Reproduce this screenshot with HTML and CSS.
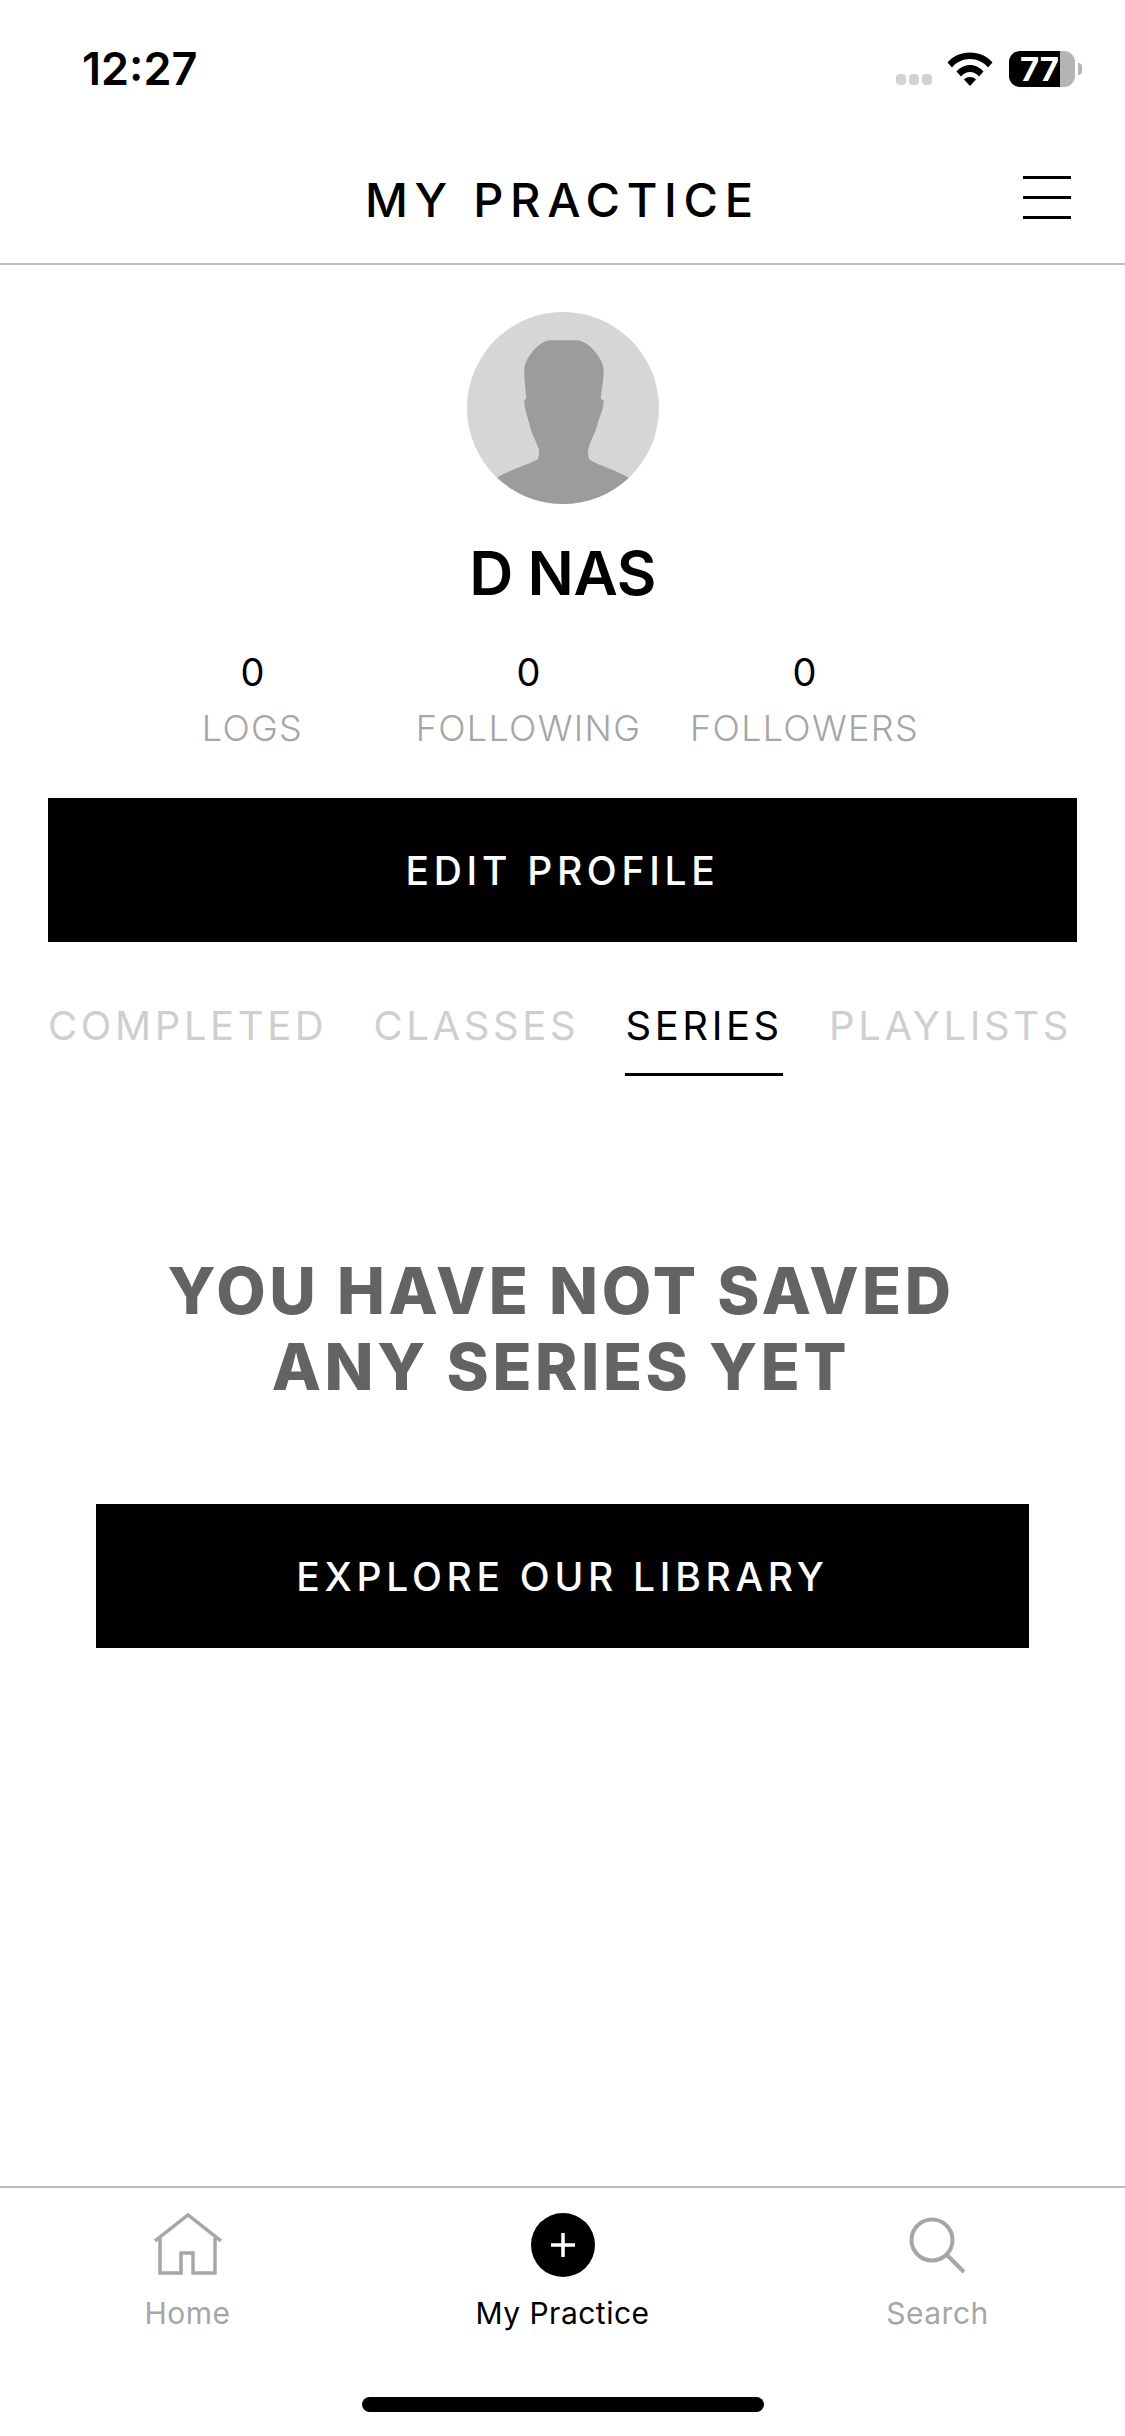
FILE: index.html
```html
<!DOCTYPE html>
<html lang="en">
<head>
	<meta charset="UTF-8">
	<title>My Practice</title>
	<link rel="stylesheet" href="styles.css">
</head>
<body>
    <div class="page">
        <div class="status_bar">
            <span class="time">12:27</span>
            <div class="status_icons">
                <div class="signal"><i></i><i></i><i></i></div>
                <svg class="wifi" width="46" height="34" viewBox="0 0 46 34">
                    <path d="M0.5 10.5C6 4 14 0.5 23 0.5S40 4 45.5 10.5L41 15.5C36.500 10 30 7 23 7S9.500 10 5 15.500Z"/>
                    <path d="M9.500 19.500C13 15.500 18 13 23 13S33 15.500 36.500 19.500L32 24.500C29.500 21.500 26.500 20 23 20S16.500 21.500 14 24.500Z"/>
                    <path d="M17 27.500C18.500 25.800 20.700 25 23 25S27.500 25.800 29 27.500L23 34Z"/>
                </svg>
                <div class="battery"><span>77</span></div>
                <div class="battery_nub"></div>
            </div>
        </div>

        <header class="top_bar">
            <h1 class="top_title">MY PRACTICE</h1>
            <div class="menu_btn"><i></i><i></i><i></i></div>
        </header>

        <section class="profile">
            <svg class="avatar" width="192" height="192" viewBox="0 0 191 191">
                <circle cx="95.500" cy="95.500" r="95.500" fill="#d6d6d6"/>
                <path fill="#9c9c9c" d="M30 165C40 158 60 152 70 147C72 143 72 139 71 135C67 125 63 118 62 111C60 103 57 97 57 88L59 86C58 75 57 68 57 58C57 46 72 28 83 28L109 28C120 28 136 46 136 58C136 68 134 76 133 86L136 88C136 97 132 103 130 111C128 120 124 125 121 135C120 139 120 143 122 147C132 153 150 158 161 165A95.500 95.500 0 0 1 30 165Z"/>
            </svg>
            <h2 class="user_name">D NAS</h2>
            <div class="stats">
                <div class="stat"><span class="stat_num">0</span><span class="stat_label">LOGS</span></div>
                <div class="stat"><span class="stat_num">0</span><span class="stat_label">FOLLOWING</span></div>
                <div class="stat"><span class="stat_num">0</span><span class="stat_label">FOLLOWERS</span></div>
            </div>
            <a class="black_btn edit_btn">EDIT PROFILE</a>
        </section>

        <nav class="tabs">
            <a class="tab">COMPLETED</a>
            <a class="tab">CLASSES</a>
            <a class="tab active">SERIES</a>
            <a class="tab">PLAYLISTS</a>
        </nav>

        <main class="empty">
            <h3 class="empty_title">YOU HAVE NOT SAVED<br>ANY SERIES YET</h3>
            <a class="black_btn explore_btn">EXPLORE OUR LIBRARY</a>
        </main>

        <footer class="tab_bar">
            <a class="bar_item">
                <svg class="bar_icon" width="68" height="64" viewBox="0 0 68 64" fill="none" stroke="#a6a6a6" stroke-width="3.500">
                    <path d="M1 28L34 2L67 28"/>
                    <path d="M6 25V60H27V40H39V60H61V25"/>
                </svg>
                <span>Home</span>
            </a>
            <a class="bar_item current">
                <svg class="bar_icon" width="64" height="64" viewBox="0 0 64 64">
                    <circle cx="32" cy="32" r="32" fill="#000"/>
                    <path d="M32 20V44M20 32H44" stroke="#fff" stroke-width="3.500"/>
                </svg>
                <span>My Practice</span>
            </a>
            <a class="bar_item">
                <svg class="bar_icon" width="60" height="64" viewBox="0 0 60 64" fill="none" stroke="#a6a6a6" stroke-width="4">
                    <circle cx="24" cy="27" r="20.500"/>
                    <path d="M39 42L56 59"/>
                </svg>
                <span>Search</span>
            </a>
        </footer>

        <div class="home_line"></div>
    </div>
</body>
</html>
```

FILE: styles.css
```css
*{
    box-sizing: border-box;
}
body{
    margin: 0;
    background: #fff;
    font-family: "Inter", "Liberation Sans", sans-serif;
    color: #000;
}
.page{
    width: 1125px;
    height: 2436px;
    display: flex;
    flex-direction: column;
    overflow: hidden;
}
.status_bar{
    height: 136px;
    padding: 45px 43px 0 82px;
    display: flex;
    justify-content: space-between;
    align-items: flex-start;
}
.time{
    font-size: 45px;
    line-height: 48px;
    font-weight: 600;
    letter-spacing: 0;
}
.status_icons{
    display: flex;
    align-items: flex-start;
    padding-top: 6px;
}
.signal{
    display: flex;
    gap: 3px;
    margin: 23px 15px 0 0;
}
.signal i{
    width: 10px;
    height: 11px;
    border-radius: 4px;
    background: #d2d2d2;
}
.wifi{
    margin: 1px 16px 0 0;
}
.battery{
    width: 66px;
    height: 36px;
    border-radius: 11px;
    background: linear-gradient(to right, #000 77%, #b5b5b5 77%);
    padding-left: 11px;
}
.battery span{
    display: block;
    font-size: 33px;
    line-height: 36px;
    font-weight: 700;
    color: #fff;
}
.battery_nub{
    width: 4px;
    height: 12px;
    margin: 12px 0 0 3px;
    border-radius: 0 4px 4px 0;
    background: #b5b5b5;
}
.top_bar{
    height: 129px;
    padding-left: 365px;
    padding-right: 54px;
    display: flex;
    justify-content: space-between;
    align-items: flex-start;
    border-bottom: 2px solid #bdbdbd;
}
.top_title{
    margin: 39px 0 0;
    font-size: 47px;
    line-height: 50px;
    font-weight: 500;
    letter-spacing: 6.7px;
}
.menu_btn{
    width: 48px;
    margin-top: 40px;
    display: flex;
    flex-direction: column;
    gap: 17px;
}
.menu_btn i{
    height: 3px;
    background: #000;
}
.profile{
    display: flex;
    flex-direction: column;
    align-items: center;
    padding-top: 47px;
}
.avatar{
    display: block;
}
.user_name{
    margin: 34px 0 0;
    font-size: 61px;
    line-height: 70px;
    font-weight: 600;
    letter-spacing: -0.5px;
}
.stats{
    width: 828px;
    margin: 42px 0 0 -68px;
    display: grid;
    grid-template-columns: repeat(3, 1fr);
}
.stat{
    display: flex;
    flex-direction: column;
    align-items: center;
}
.stat_num{
    font-size: 38px;
    line-height: 44px;
    font-weight: 400;
}
.stat_label{
    margin-top: 14px;
    font-size: 36px;
    line-height: 40px;
    font-weight: 300;
    color: #a6a6a6;
    letter-spacing: 1.3px;
}
.black_btn{
    display: flex;
    align-items: center;
    justify-content: center;
    background: #000;
    color: #fff;
    font-size: 39px;
    font-weight: 500;
    letter-spacing: 4.7px;
}
.edit_btn{
    width: 1029px;
    height: 144px;
    margin-top: 50px;
}
.tabs{
    margin-top: 46px;
    padding: 0 53px 0 48px;
    display: flex;
    justify-content: space-between;
}
.tab{
    height: 88px;
    padding-top: 16px;
    font-size: 40px;
    line-height: 44px;
    font-weight: 400;
    letter-spacing: 3.6px;
    color: #cfcfcf;
}
.tab.active{
    color: #000;
    border-bottom: 3px solid #000;
}
.empty{
    flex: 1;
    display: flex;
    flex-direction: column;
    align-items: center;
    padding-top: 177px;
}
.empty_title{
    margin: 0 3px 0 0;
    font-size: 64px;
    line-height: 76px;
    font-weight: 800;
    text-align: center;
    color: #636363;
    letter-spacing: 3.6px;
}
.explore_btn{
    width: 933px;
    height: 144px;
    margin-top: 99px;
}
.tab_bar{
    height: 178px;
    border-top: 2px solid #bdbdbd;
    display: grid;
    grid-template-columns: repeat(3, 375px);
}
.bar_item{
    display: flex;
    flex-direction: column;
    align-items: center;
    padding-top: 25px;
    font-size: 30px;
    line-height: 38px;
    letter-spacing: 0.5px;
    color: #a6a6a6;
}
.bar_item.current{
    color: #000;
}
.bar_icon{
    display: block;
    margin-bottom: 17px;
}
.home_line{
    width: 402px;
    height: 15px;
    margin: 33px auto 24px;
    border-radius: 8px;
    background: #000;
}
```
